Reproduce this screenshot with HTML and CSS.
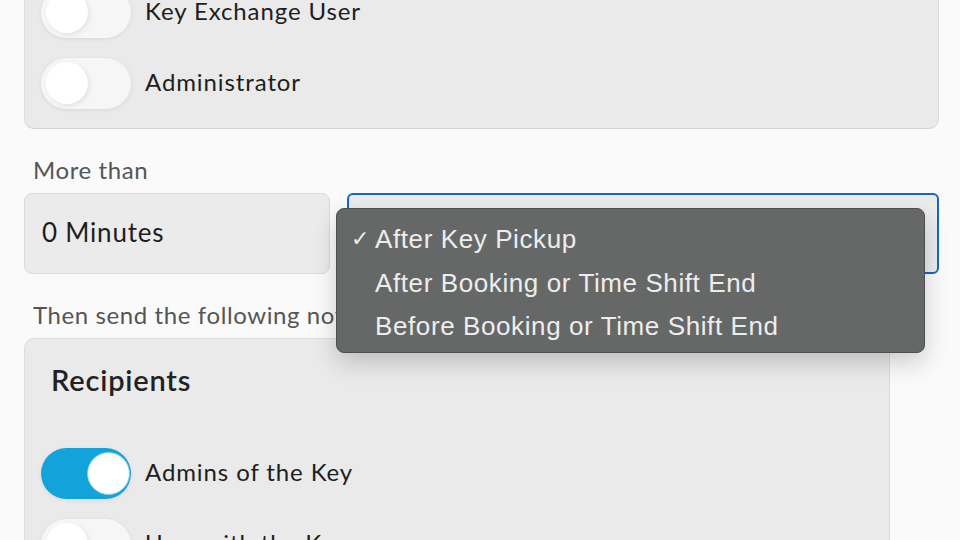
FILE: index.html
```html
<!DOCTYPE html>
<html lang="en">
<head>
  <meta charset="UTF-8" />
  <title>Key Notification</title>
  <link rel="stylesheet" href="styles.css">
</head>
<body>
  <div class="page">

    <!-- who the rule applies to -->
    <div class="card card-roles">
      <div class="toggle-row">
        <span class="switch"><span class="knob"></span></span>
        <span class="toggle-label">Key Exchange User</span>
      </div>
      <div class="toggle-row">
        <span class="switch"><span class="knob"></span></span>
        <span class="toggle-label">Administrator</span>
      </div>
    </div>

    <p class="field-label">More than</p>
    <div class="field-row">
      <div class="input-box">0 Minutes</div>
      <div class="select-wrap">
        <div class="select-box"></div>
        <!--open select list-->
        <ul class="select-menu">
          <li class="checked"><span class="check">✓</span>After Key Pickup</li>
          <li><span class="check"></span>After Booking or Time Shift End</li>
          <li><span class="check"></span>Before Booking or Time Shift End</li>
        </ul>
      </div>
    </div>

    <p class="field-label">Then send the following notification</p>
    <div class="card card-recipients">
      <h2>Recipients</h2>
      <div class="toggle-row">
        <span class="switch on"><span class="knob"></span></span>
        <span class="toggle-label">Admins of the Key</span>
      </div>
      <div class="toggle-row">
        <span class="switch"><span class="knob"></span></span>
        <span class="toggle-label">User with the Key</span>
      </div>
    </div>

  </div>
</body>
</html>
```

FILE: styles.css
```css
body {
  margin: 0;
  background: #fafafa;
  font-family: 'Lato', 'Open Sans', sans-serif;
  color: #1e1e1e;
  overflow: hidden;
}

.page {
  padding: 0 21px 0 24px;
}

.card {
  background: #eaeaea;
  border: 1px solid #dcdcdc;
  border-bottom-color: #d2d2d2;
  border-radius: 10px;
  padding: 20px 16px 19px 16px;
}

.card-roles {
  margin-top: -34px;
}

.card-recipients {
  margin-right: 49px;
  margin-top: 10px;
  padding-top: 20px;
}

.card-recipients h2 {
  margin: 0 0 47px 10px;
  font-size: 29px;
  font-weight: 600;
  letter-spacing: 0.8px;
  line-height: 42px;
  color: #222;
}

.toggle-row {
  display: flex;
  align-items: center;
  gap: 14px;
  height: 51px;
  margin-bottom: 20px;
}

.toggle-row:last-child {
  margin-bottom: 0;
}

.toggle-label {
  font-size: 24px;
  letter-spacing: 0.9px;
  padding-bottom: 4px;
  color: #1e1e1e;
}

/* switch: off by default */
.switch {
  position: relative;
  width: 90px;
  height: 51px;
  border-radius: 26px;
  background: #f6f6f6;
  box-shadow: 0 1px 4px rgba(0, 0, 0, 0.08);
  flex-shrink: 0;
}

.switch .knob {
  position: absolute;
  top: 4px;
  left: 5px;
  width: 42px;
  height: 42px;
  border-radius: 50%;
  background: #fff;
  box-shadow: 2px 2px 5px rgba(0, 0, 0, 0.08);
}

.switch.on {
  background: #12a3db;
}

.switch.on .knob {
  left: 46px;
  top: 4px;
  width: 41px;
  height: 41px;
  border: 1px solid #7fcdea;
  box-shadow: none;
}

.field-label {
  margin: 29px 0 11px 9px;
  font-size: 24px;
  letter-spacing: 0.6px;
  line-height: 24px;
  color: #555;
}

.field-row {
  display: flex;
  gap: 17px;
}

.input-box {
  width: 306px;
  height: 81px;
  box-sizing: border-box;
  background: #ebebeb;
  border: 1px solid #dadada;
  border-radius: 8px;
  padding-left: 17px;
  font-size: 26px;
  letter-spacing: 0.8px;
  line-height: 76px;
  color: #1e1e1e;
}

.select-wrap {
  position: relative;
  flex: 1;
}

.select-box {
  height: 81px;
  box-sizing: border-box;
  background: #ebebeb;
  border: 2px solid #1866c4;
  border-radius: 6px;
}

.select-menu {
  position: absolute;
  top: 15px;
  left: -11px;
  width: 589px;
  height: 145px;
  box-sizing: border-box;
  margin: 0;
  padding: 14px 0 0 0;
  list-style: none;
  background: #666868;
  border: 1px solid #4d4f4f;
  border-radius: 8px;
  box-shadow: 0 10px 24px rgba(0, 0, 0, 0.18);
  font-family: 'Liberation Sans', 'Arial', sans-serif;
  font-size: 26px;
  letter-spacing: 0.6px;
  color: #ededed;
  z-index: 2;
}

.select-menu li {
  display: flex;
  height: 43.5px;
  line-height: 32px;
}

.select-menu .check {
  width: 38px;
  padding-left: 14px;
  box-sizing: border-box;
  font-size: 22px;
}
```
